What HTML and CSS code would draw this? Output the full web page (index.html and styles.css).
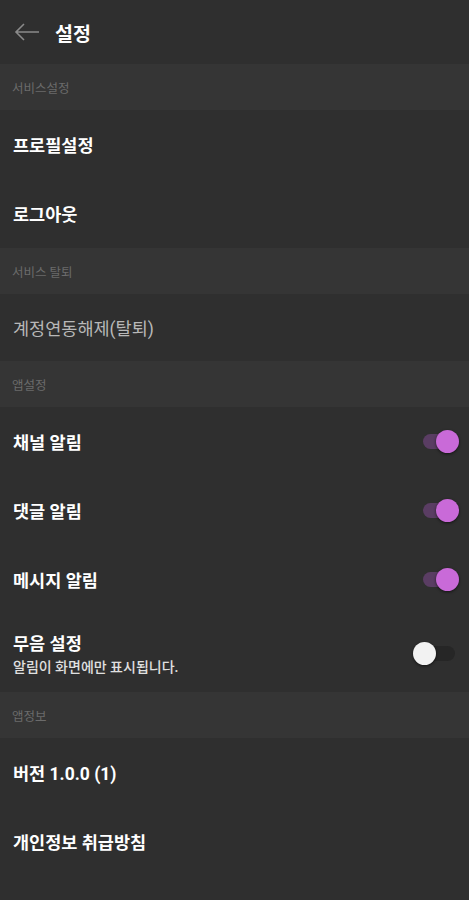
FILE: index.html
```html
<!DOCTYPE html>
<html lang="ko">
<head>
<meta charset="UTF-8" />
<meta name="viewport" content="width=device-width, initial-scale=1" />
<title>설정</title>
<link rel="stylesheet" href="styles.css">
</head>
<body>
  <header class="topbar">
    <svg class="back" width="26" height="18" viewBox="0 0 26 18">
      <path d="M25 9H2M10 1L2 9l8 8" fill="none" stroke="#8a8a8a" stroke-width="1.6"/>
    </svg>
    <h1>설정</h1>
  </header>

  <div class="section">서비스설정</div>
  <div class="row"><span class="label">프로필설정</span></div>
  <div class="row"><span class="label">로그아웃</span></div>

  <div class="section">서비스 탈퇴</div>
  <div class="row short"><span class="label dim">계정연동해제(탈퇴)</span></div>

  <div class="section">앱설정</div>
  <div class="row">
    <span class="label">채널 알림</span>
    <span class="toggle on"></span>
  </div>
  <div class="row">
    <span class="label">댓글 알림</span>
    <span class="toggle on"></span>
  </div>
  <div class="row">
    <span class="label">메시지 알림</span>
    <span class="toggle on"></span>
  </div>
  <div class="row tall">
    <div class="text">
      <span class="label">무음 설정</span>
      <span class="sub">알림이 화면에만 표시됩니다.</span>
    </div>
    <span class="toggle"></span>
  </div>

  <div class="section">앱정보</div>
  <div class="row"><span class="label">버전 1.0.0 (1)</span></div>
  <div class="row"><span class="label">개인정보 취급방침</span></div>
</body>
</html>
```

FILE: styles.css
```css
body {
  margin: 0;
  background: #2f2f2f;
  color: #fff;
  font-family: Roboto, "Noto Sans CJK KR", sans-serif;
  min-height: 100vh;
}
.topbar {
  height: 64px;
  display: flex;
  align-items: center;
  padding-left: 14px;
}
.back { margin-right: 15px; }
.topbar h1 {
  margin: 0;
  font-size: 19.5px;
  font-weight: bold;
}
.section {
  height: 46px;
  background: #353535;
  color: #6b6b6b;
  font-size: 12.5px;
  display: flex;
  align-items: center;
  padding-left: 12px;
}
.row {
  height: 69px;
  display: flex;
  align-items: center;
  justify-content: space-between;
  padding: 0 14px 0 13px;
}
.row.short { height: 67px; }
.row.tall { height: 78px; }
.label {
  font-size: 17.5px;
  font-weight: bold;
  line-height: 1.2;
  padding-top: 3px;
}
.label.dim {
  color: #b8b8b8;
  font-weight: normal;
}
.text {
  display: flex;
  flex-direction: column;
  gap: 1px;
}
.sub {
  font-size: 14px;
  font-weight: 500;
  color: #e0e0e0;
}
.toggle {
  position: relative;
  width: 32px;
  height: 15px;
  border-radius: 8px;
  background: #262626;
}
.toggle::after {
  content: "";
  position: absolute;
  top: -4px;
  left: -10px;
  width: 23px;
  height: 23px;
  border-radius: 50%;
  background: #f2f2f2;
  box-shadow: 0 1px 3px rgba(0,0,0,0.6);
}
.toggle.on { background: #5a3d63; }
.toggle.on::after {
  left: auto;
  right: -4px;
  background: #c96ad8;
}
```
